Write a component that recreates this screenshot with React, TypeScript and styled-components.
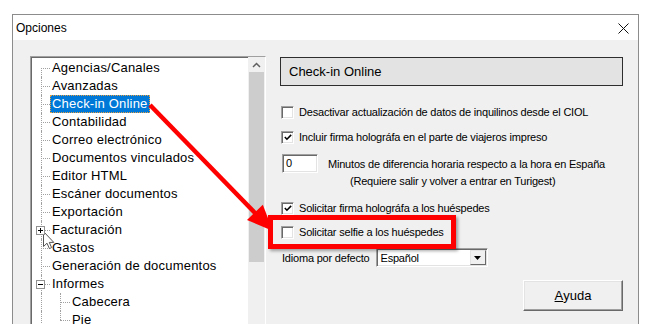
import { FC } from "react";
import styled, { createGlobalStyle, css } from "styled-components";

const GlobalStyle = createGlobalStyle`
  html, body {
    margin: 0;
    padding: 0;
    background: #ffffff;
  }
  body {
    font-family: "Liberation Sans", Arial, sans-serif;
    color: #000;
  }
`;

interface TreeItem {
  label: string;
  level: number;
  first?: boolean;
  last?: boolean;
  expander?: "plus" | "minus";
  selected?: boolean;
}

const treeItems: TreeItem[] = [
  { label: "Agencias/Canales", level: 0, first: true },
  { label: "Avanzadas", level: 0 },
  { label: "Check-in Online", level: 0, selected: true },
  { label: "Contabilidad", level: 0 },
  { label: "Correo electrónico", level: 0 },
  { label: "Documentos vinculados", level: 0 },
  { label: "Editor HTML", level: 0 },
  { label: "Escáner documentos", level: 0 },
  { label: "Exportación", level: 0 },
  { label: "Facturación", level: 0, expander: "plus" },
  { label: "Gastos", level: 0 },
  { label: "Generación de documentos", level: 0 },
  { label: "Informes", level: 0, expander: "minus" },
  { label: "Cabecera", level: 1 },
  { label: "Pie", level: 1, last: true },
];

const CheckMark = () => (
  <svg width="11" height="11" viewBox="0 0 11 11">
    <polyline points="2,5 4.3,7.4 9,2.6" fill="none" stroke="#000" strokeWidth="1.7" />
  </svg>
);

const Checkbox: FC<{ checked?: boolean }> = ({ checked }) => (
  <Box>{checked && <CheckMark />}</Box>
);

const TreeNode: FC<{ item: TreeItem }> = ({ item }) => (
  <Row>
    {item.level > 0 && <Guide />}
    <Connector $first={item.first} $last={item.last} $wide={item.level > 0}>
      {item.expander && (
        <Expander>
          <ExpanderBar />
          {item.expander === "plus" && <ExpanderBar $vertical />}
        </Expander>
      )}
    </Connector>
    <NodeLabel $selected={item.selected}>{item.label}</NodeLabel>
  </Row>
);

const App = () => {
  return (
    <Root>
      <GlobalStyle />
      <Window>
        <TitleBar>
          <span>Opciones</span>
          <svg width="11" height="11" viewBox="0 0 11 11">
            <path d="M0.5 0.5 L10.5 10.5 M10.5 0.5 L0.5 10.5" stroke="#111" strokeWidth="1" />
          </svg>
        </TitleBar>
        <Body>
          <TreeBox>
            <TreeList>
              {treeItems.map((item) => (
                <TreeNode key={item.label} item={item} />
              ))}
            </TreeList>
            <ScrollBar>
              <ScrollButton>
                <svg width="9" height="6" viewBox="0 0 9 6">
                  <polyline points="1,5 4.5,1.5 8,5" fill="none" stroke="#606060" strokeWidth="1.5" />
                </svg>
              </ScrollButton>
              <Thumb />
            </ScrollBar>
          </TreeBox>

          <RightPanel>
            <Header>Check-in Online</Header>
            <CheckRow $mt={19}>
              <Checkbox />
              <span>Desactivar actualización de datos de inquilinos desde el CIOL</span>
            </CheckRow>
            <CheckRow $mt={11}>
              <Checkbox checked />
              <span>Incluir firma holográfa en el parte de viajeros impreso</span>
            </CheckRow>
            <InputRow>
              <NumberInput>0</NumberInput>
              <Note>
                <div>Minutos de diferencia horaria respecto a la hora en España</div>
                <NoteSecond>(Requiere salir y volver a entrar en Turigest)</NoteSecond>
              </Note>
            </InputRow>
            <CheckRow $mt={11}>
              <Checkbox checked />
              <span>Solicitar firma holográfa a los huéspedes</span>
            </CheckRow>
            <CheckRow $mt={10}>
              <Checkbox />
              <span>Solicitar selfie a los huéspedes</span>
            </CheckRow>
            <LanguageRow>
              <span>Idioma por defecto</span>
              <Select>
                <span>Español</span>
                <DropButton>
                  <svg width="7" height="4" viewBox="0 0 7 4">
                    <polygon points="0,0 7,0 3.5,4" fill="#000" />
                  </svg>
                </DropButton>
              </Select>
            </LanguageRow>
            <HelpButton>
              <u>A</u>yuda
            </HelpButton>
          </RightPanel>
        </Body>
      </Window>

      <Highlight />
      <Overlay width="648" height="324" viewBox="0 0 648 324">
        <line x1="150" y1="105" x2="256" y2="214" stroke="#ff0000" strokeWidth="4.5" />
        <polygon points="273,231 262.8,204.7 247,220.1" fill="#ff0000" />
      </Overlay>
      <Cursor width="12" height="19" viewBox="0 0 12 19">
        <path
          d="M0.5 0.5 L0.5 15.5 L4 12.2 L6.4 17.6 L8.6 16.6 L6.3 11.4 L10.8 11.4 Z"
          fill="#ffffff"
          stroke="#555"
          strokeWidth="1"
        />
      </Cursor>
    </Root>
  );
};

export default App;

const Root = styled.div`
  position: relative;
  width: 648px;
  height: 324px;
  overflow: hidden;
  background: #fff;
`;

const Window = styled.div`
  margin: 14px 0 0 12px;
  width: 627px;
  height: 330px;
  box-sizing: border-box;
  border: 1px solid #8c8c8c;
  border-bottom: none;
  background: #f0f0f0;
  display: flex;
  flex-direction: column;
`;

const TitleBar = styled.div`
  height: 25px;
  flex-shrink: 0;
  background: #fff;
  display: flex;
  align-items: center;
  justify-content: space-between;
  padding: 1px 9px 0 3px;
  box-sizing: border-box;
  font-size: 12px;
`;

const Body = styled.div`
  display: flex;
  align-items: flex-start;
  padding: 16px 0 0 17px;
`;

const TreeBox = styled.div`
  width: 236px;
  height: 290px;
  box-sizing: border-box;
  border: 1px solid;
  border-color: #a0a0a0 #ffffff #ffffff #a0a0a0;
  box-shadow: inset 1px 1px 0 #696969, inset -1px -1px 0 #e3e3e3;
  background: #fff;
  display: flex;
`;

const TreeList = styled.div`
  flex: 1;
  padding: 2px 0 0 1px;
  display: flex;
  flex-direction: column;
  font-size: 13px;
  letter-spacing: 0.2px;
`;

const Row = styled.div`
  display: flex;
  height: 18px;
  flex-shrink: 0;
`;

const dotted = "1px dotted #a0a0a0";

const Guide = styled.div`
  width: 18px;
  position: relative;
  &::before {
    content: "";
    position: absolute;
    left: 9px;
    top: 0;
    bottom: 0;
    border-left: ${dotted};
  }
`;

const Connector = styled.div<{ $first?: boolean; $last?: boolean; $wide?: boolean }>`
  width: ${(p) => (p.$wide ? 20 : 18)}px;
  position: relative;
  &::before {
    content: "";
    position: absolute;
    left: ${(p) => (p.$wide ? 10 : 9)}px;
    top: ${(p) => (p.$first ? 9 : 0)}px;
    ${(p) => (p.$last ? "height: 9px;" : "bottom: 0;")}
    border-left: ${dotted};
  }
  &::after {
    content: "";
    position: absolute;
    left: ${(p) => (p.$wide ? 10 : 9)}px;
    top: 9px;
    right: 0;
    border-top: ${dotted};
  }
`;

const Expander = styled.div`
  position: absolute;
  left: 4px;
  top: 5px;
  width: 9px;
  height: 9px;
  box-sizing: border-box;
  border: 1px solid #919191;
  background: #fff;
  z-index: 1;
`;

const ExpanderBar = styled.div<{ $vertical?: boolean }>`
  position: absolute;
  background: #000;
  ${(p) =>
    p.$vertical
      ? css`
          left: 3px;
          top: 1px;
          width: 1px;
          height: 5px;
        `
      : css`
          left: 1px;
          top: 3px;
          width: 5px;
          height: 1px;
        `}
`;

const NodeLabel = styled.div<{ $selected?: boolean }>`
  height: 18px;
  box-sizing: border-box;
  padding: 0 1px;
  line-height: 16px;
  white-space: nowrap;
  border: 1px dotted ${(p) => (p.$selected ? "#e8a040" : "transparent")};
  background: ${(p) => (p.$selected ? "#0078d7" : "transparent")};
  color: ${(p) => (p.$selected ? "#fff" : "#000")};
`;

const ScrollBar = styled.div`
  width: 17px;
  background: #f0f0f0;
  display: flex;
  flex-direction: column;
`;

const ScrollButton = styled.div`
  height: 15px;
  display: flex;
  align-items: center;
  justify-content: center;
`;

const Thumb = styled.div`
  height: 190px;
  margin: 0 1px;
  background: #cdcdcd;
`;

const RightPanel = styled.div`
  margin-left: 14px;
  width: 343px;
  display: flex;
  flex-direction: column;
  font-size: 11px;
  letter-spacing: -0.2px;
`;

const Header = styled.div`
  margin-top: 1px;
  height: 29px;
  box-sizing: border-box;
  border: 1px solid #2e2e2e;
  background: #e3e3e3;
  padding-left: 8px;
  display: flex;
  align-items: center;
  font-size: 13px;
  letter-spacing: 0;
`;

const CheckRow = styled.div<{ $mt: number }>`
  display: flex;
  align-items: center;
  gap: 5px;
  height: 14px;
  margin-top: ${(p) => p.$mt}px;
  padding-left: 1px;
  white-space: nowrap;
`;

const sunken = css`
  box-sizing: border-box;
  border: 1px solid;
  border-color: #a0a0a0 #ffffff #ffffff #a0a0a0;
  box-shadow: inset 1px 1px 0 #696969, inset -1px -1px 0 #e3e3e3;
  background: #fff;
`;

const Box = styled.span`
  ${sunken};
  width: 13px;
  height: 13px;
  display: inline-flex;
  align-items: center;
  justify-content: center;
  padding: 1px 0 0 1px;
  flex-shrink: 0;
`;

const InputRow = styled.div`
  display: flex;
  align-items: flex-start;
  gap: 10px;
  margin-top: 10px;
  padding-left: 2px;
`;

const NumberInput = styled.div`
  ${sunken};
  width: 36px;
  height: 19px;
  padding-left: 3px;
  line-height: 17px;
  flex-shrink: 0;
`;

const Note = styled.div`
  padding-top: 2px;
  line-height: 17px;
  white-space: nowrap;
`;

const NoteSecond = styled.div`
  padding-left: 22px;
`;

const LanguageRow = styled.div`
  display: flex;
  align-items: center;
  gap: 6px;
  margin-top: 9px;
  padding-left: 2px;
  height: 19px;
`;

const Select = styled.div`
  ${sunken};
  width: 112px;
  height: 19px;
  display: flex;
  align-items: center;
  justify-content: space-between;
  padding: 0 1px 0 4px;
`;

const DropButton = styled.div`
  width: 16px;
  height: 15px;
  box-sizing: border-box;
  border: 1px solid;
  border-color: #e3e3e3 #696969 #696969 #e3e3e3;
  background: #f0f0f0;
  display: flex;
  align-items: center;
  justify-content: center;
`;

const HelpButton = styled.div`
  align-self: flex-end;
  margin-top: 13px;
  width: 100px;
  height: 31px;
  box-sizing: border-box;
  border: 1px solid;
  border-color: #ffffff #696969 #696969 #ffffff;
  box-shadow: inset -1px -1px 0 #a0a0a0, inset 1px 1px 0 #e3e3e3;
  background: #f0f0f0;
  display: flex;
  align-items: center;
  justify-content: center;
  font-size: 13px;
  letter-spacing: 0;
`;

const Highlight = styled.div`
  position: absolute;
  left: 268px;
  top: 215px;
  width: 188px;
  height: 34px;
  box-sizing: border-box;
  border: 5px solid #ff0000;
  box-shadow: 2px 2px 3px rgba(0, 0, 0, 0.35);
  pointer-events: none;
`;

const Overlay = styled.svg`
  position: absolute;
  left: 0;
  top: 0;
  pointer-events: none;
`;

const Cursor = styled.svg`
  position: absolute;
  left: 43px;
  top: 231px;
  pointer-events: none;
`;
